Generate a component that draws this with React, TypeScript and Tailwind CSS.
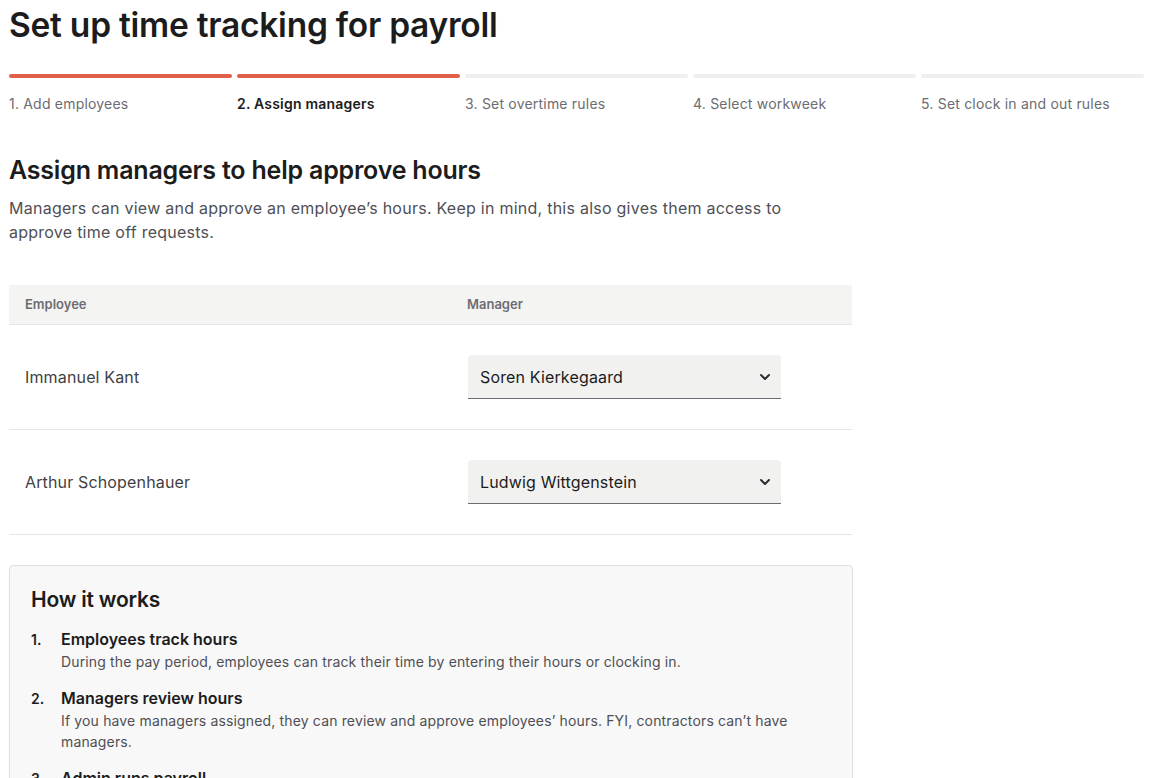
import { ChevronDown } from "lucide-react";

const steps = [
  { label: "1. Add employees", done: true },
  { label: "2. Assign managers", done: true, active: true },
  { label: "3. Set overtime rules" },
  { label: "4. Select workweek" },
  { label: "5. Set clock in and out rules" },
];

const rows = [
  { employee: "Immanuel Kant", manager: "Soren Kierkegaard" },
  { employee: "Arthur Schopenhauer", manager: "Ludwig Wittgenstein" },
];

const howItWorks = [
  {
    title: "Employees track hours",
    body: "During the pay period, employees can track their time by entering their hours or clocking in.",
  },
  {
    title: "Managers review hours",
    body: "If you have managers assigned, they can review and approve employees’ hours. FYI, contractors can’t have managers.",
  },
  {
    title: "Admin runs payroll",
    body: "Once hours are approved, they’re added to payroll automatically so you can review and run payroll.",
  },
];

export default function App() {
  return (
    <div className="min-h-screen bg-white pl-[9px] pr-[16px] text-[#1c1c1c] font-['Inter',sans-serif]">
      {/* Title */}
      <h1 className="pt-[5px] text-[33.5px] leading-[40px] font-semibold tracking-[-0.25px]">
        Set up time tracking for payroll
      </h1>

      {/* Stepper */}
      <div className="mt-[29px] grid grid-cols-5 gap-[5px]">
        {steps.map((s) => (
          <div key={s.label}>
            <div
              className={`h-[4px] rounded-full ${s.done ? "bg-[#e0604a]" : "bg-[#efefef]"}`}
            />
            <div
              className={`mt-[16px] text-[14px] leading-[20px] tracking-[0.2px] ${
                s.active ? "font-semibold text-[#1c1c1c]" : "text-[#6c6c72]"
              }`}
            >
              {s.label}
            </div>
          </div>
        ))}
      </div>

      {/* Section */}
      <h2 className="mt-[40px] text-[25px] leading-[32px] font-semibold tracking-[-0.2px]">
        Assign managers to help approve hours
      </h2>
      <p className="mt-[10px] max-w-[800px] text-[16px] leading-[24px] tracking-[0.25px] text-[#4f4f55]">
        Managers can view and approve an employee’s hours. Keep in mind, this also gives them
        access to approve time off requests.
      </p>

      {/* Table */}
      <div className="mt-[41px] w-[843px]">
        <div className="grid grid-cols-[443px_1fr] h-[40px] items-center bg-[#f4f4f3] border-b border-[#e6e6e6] text-[13px] font-semibold text-[#6c6c72]">
          <div className="pl-[16px]">Employee</div>
          <div className="pl-[15px]">Manager</div>
        </div>
        {rows.map((r) => (
          <div
            key={r.employee}
            className="grid grid-cols-[443px_1fr] h-[105px] items-center border-b border-[#e6e6e6]"
          >
            <div className="pl-[16px] text-[16px] tracking-[0.15px] text-[#3f3f44]">{r.employee}</div>
            <div className="pl-[16px]">
              <div className="flex h-[44px] w-[313px] items-center justify-between rounded-t-[4px] bg-[#f1f1f0] border-b border-[#6c6c72] pl-[12px] pr-[8px] text-[16px] tracking-[0.15px] text-[#1c1c1c]">
                <span>{r.manager}</span>
                <ChevronDown size={16} strokeWidth={3} className="text-[#2f2f33]" />
              </div>
            </div>
          </div>
        ))}
      </div>

      {/* How it works */}
      <div className="mt-[30px] w-[844px] rounded-[4px] border border-[#e0e0e0] bg-[#f8f8f8] px-[21px] pt-[20px] pb-[20px]">
        <h3 className="text-[21px] leading-[28px] font-semibold tracking-[-0.2px]">How it works</h3>
        <ol className="mt-[14px] flex flex-col gap-[15px]">
          {howItWorks.map((item, i) => (
            <li key={item.title} className="flex">
              <span className="w-[30px] shrink-0 pt-[1px] text-[14px] font-semibold">{i + 1}.</span>
              <div>
                <div className="text-[16px] leading-[22px] font-semibold">{item.title}</div>
                <div className="mt-[1px] text-[14px] leading-[21px] tracking-[0.15px] text-[#4f4f55] max-w-[750px]">
                  {item.body}
                </div>
              </div>
            </li>
          ))}
        </ol>
      </div>
    </div>
  );
}
